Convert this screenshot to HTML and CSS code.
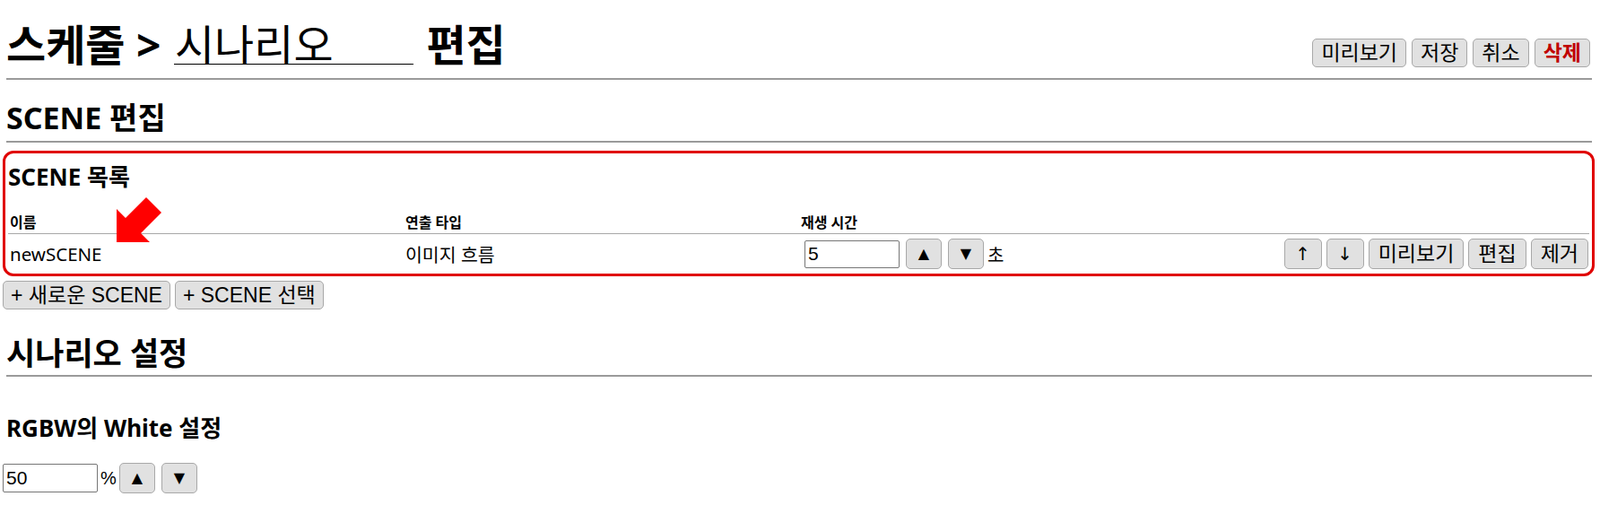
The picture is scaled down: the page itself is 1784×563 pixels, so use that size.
FILE: index.html
```html
<!DOCTYPE html>
<html lang="ko">
<head>
<meta charset="utf-8">
<title>스케줄 시나리오 편집</title>
<link rel="stylesheet" href="styles.css">
</head>
<body>
<header class="topbar">
  <h1 class="title">스케줄 &gt; <input class="title-input" type="text" value="시나리오"> 편집</h1>
  <div class="actions">
    <button class="btn">미리보기</button>
    <button class="btn">저장</button>
    <button class="btn">취소</button>
    <button class="btn btn-danger">삭제</button>
  </div>
</header>
<hr class="rule rule-top">

<h2 class="section first">SCENE 편집</h2>
<hr class="rule">

<section class="scene-box">
  <h3 class="subsection">SCENE 목록</h3>
  <table class="scene-table">
    <colgroup><col class="c"><col class="c"><col class="c"><col></colgroup>
    <thead>
      <tr><th>이름</th><th>연출 타입</th><th>재생 시간</th><th></th></tr>
    </thead>
    <tbody>
      <tr>
        <td>newSCENE</td>
        <td>이미지 흐름</td>
        <td>
          <div class="dur">
            <input class="num num-dur" type="text" value="5">
            <button class="btn btn-tri">▲</button>
            <button class="btn btn-tri">▼</button>
            <span class="unit">초</span>
          </div>
        </td>
        <td>
          <div class="row-actions">
            <button class="btn btn-row btn-arrow">↑</button>
            <button class="btn btn-row btn-arrow">↓</button>
            <button class="btn btn-row">미리보기</button>
            <button class="btn btn-row">편집</button>
            <button class="btn btn-row">제거</button>
          </div>
        </td>
      </tr>
    </tbody>
  </table>
  <svg class="pointer" viewBox="0 0 60 60" width="60" height="60" aria-hidden="true">
    <polygon points="5,55 5,18 15,28 38,5 55,22 32,45 42,55" fill="#f00"/>
  </svg>
</section>
<div class="add-row">
  <button class="btn btn-add">+ 새로운 SCENE</button>
  <button class="btn btn-add">+ SCENE 선택</button>
</div>

<h2 class="section second">시나리오 설정</h2>
<hr class="rule rule-second">

<h3 class="subsection white-title">RGBW의 White 설정</h3>
<div class="white-row">
  <input class="num num-white" type="text" value="50">
  <span class="pct">%</span>
  <button class="btn btn-tri">▲</button>
  <button class="btn btn-tri">▼</button>
</div>
</body>
</html>
```
FILE: styles.css
```css
* { box-sizing: border-box; }

body {
  margin: 0;
  padding: 22px 6px 0 3px;
  font-family: "Noto Sans", "Noto Sans CJK KR", sans-serif;
  color: #000;
  background: #fff;
}

.topbar {
  display: flex;
  justify-content: space-between;
  align-items: flex-end;
  padding: 0 5px 0 4px;
}

.title {
  margin: 0;
  font-size: 48px;
  line-height: 56px;
  font-weight: 700;
  white-space: nowrap;
}

.title-input {
  font-family: "Noto Sans", "Noto Sans CJK KR", sans-serif;
  font-size: 48px;
  font-weight: 400;
  width: 267px;
  height: 48px;
  padding: 0 1px;
  border: 0;
  border-bottom: 1px solid #000;
  border-radius: 0;
  background: transparent;
  color: #000;
  margin: 0 2px;
}

.actions {
  display: flex;
  gap: 6px;
  margin-bottom: 3px;
}

.btn {
  font-family: "Liberation Sans", "Noto Sans CJK KR", sans-serif;
  font-size: 23px;
  height: 32px;
  padding: 0 9px;
  background: #e1e1e1;
  border: 1px solid #a8a8a8;
  border-radius: 5px;
  color: #000;
  line-height: 1;
  white-space: nowrap;
}

.btn-danger {
  color: #c00000;
  font-weight: 700;
}

.btn-add {
  font-size: 23px;
  padding: 0 8px;
}

.rule {
  height: 2px;
  border: 0;
  background: #9a9a9a;
  margin: 6px 3px 0 4px;
}

.rule-top { margin-top: 9px; }
.rule-second { margin-top: 4px; }

.section {
  margin: 22px 0 0 4px;
  font-size: 34px;
  line-height: 40px;
  font-weight: 700;
}

.section.second {
  margin-top: 29px;
  font-size: 35px;
}

.scene-box {
  position: relative;
  margin-top: 9px;
  border: 3px solid #e00000;
  border-radius: 12px;
  padding: 0 3px 3px;
}

.subsection {
  margin: 11px 0 0;
  font-size: 26px;
  line-height: 30px;
  font-weight: 700;
}

.white-title {
  margin: 42px 0 0 4px;
}

.scene-table {
  width: 100%;
  margin-top: 26px;
  border-collapse: collapse;
  table-layout: fixed;
}

.scene-table col.c { width: 441px; }

.scene-table th {
  text-align: left;
  font-size: 16px;
  line-height: 20px;
  font-weight: 700;
  padding: 0 2px 2px;
  border-bottom: 1px solid #a8a8a8;
}

.scene-table td {
  font-size: 20.5px;
  padding: 5px 2px 2px;
  vertical-align: middle;
  white-space: nowrap;
}

.scene-table td:last-child { padding-right: 0; }

.dur {
  display: flex;
  align-items: center;
  gap: 7px;
  padding-left: 4px;
}

.num {
  font-family: "Liberation Sans", "Noto Sans CJK KR", sans-serif;
  font-size: 21px;
  border: 1px solid #767676;
  border-radius: 2px;
  padding: 0 3px;
  background: #fff;
  color: #000;
}

.num-dur { width: 106px; height: 31px; }
.num-white { width: 106px; height: 32px; }

.btn-tri {
  font-family: "DejaVu Sans", sans-serif;
  font-size: 16px;
  width: 40px;
  height: 34px;
  padding: 0;
}

.unit {
  margin-left: -3px;
  font-size: 20px;
}

.row-actions {
  display: flex;
  justify-content: flex-end;
  gap: 5px;
  padding-right: 1px;
}

.btn-row {
  height: 34px;
  padding: 0 10px;
}

.btn-arrow {
  width: 42px;
  padding: 0;
  font-family: "DejaVu Sans", sans-serif;
  font-size: 20px;
}

.pointer {
  position: absolute;
  left: 119px;
  top: 44px;
}

.add-row {
  display: flex;
  gap: 5px;
  margin-top: 5px;
}

.white-row {
  display: flex;
  align-items: center;
  margin-top: 24px;
}

.pct {
  font-family: "Liberation Sans", sans-serif;
  font-size: 20px;
  margin: 0 3px;
}

.white-row .btn-tri + .btn-tri { margin-left: 7px; }
```
